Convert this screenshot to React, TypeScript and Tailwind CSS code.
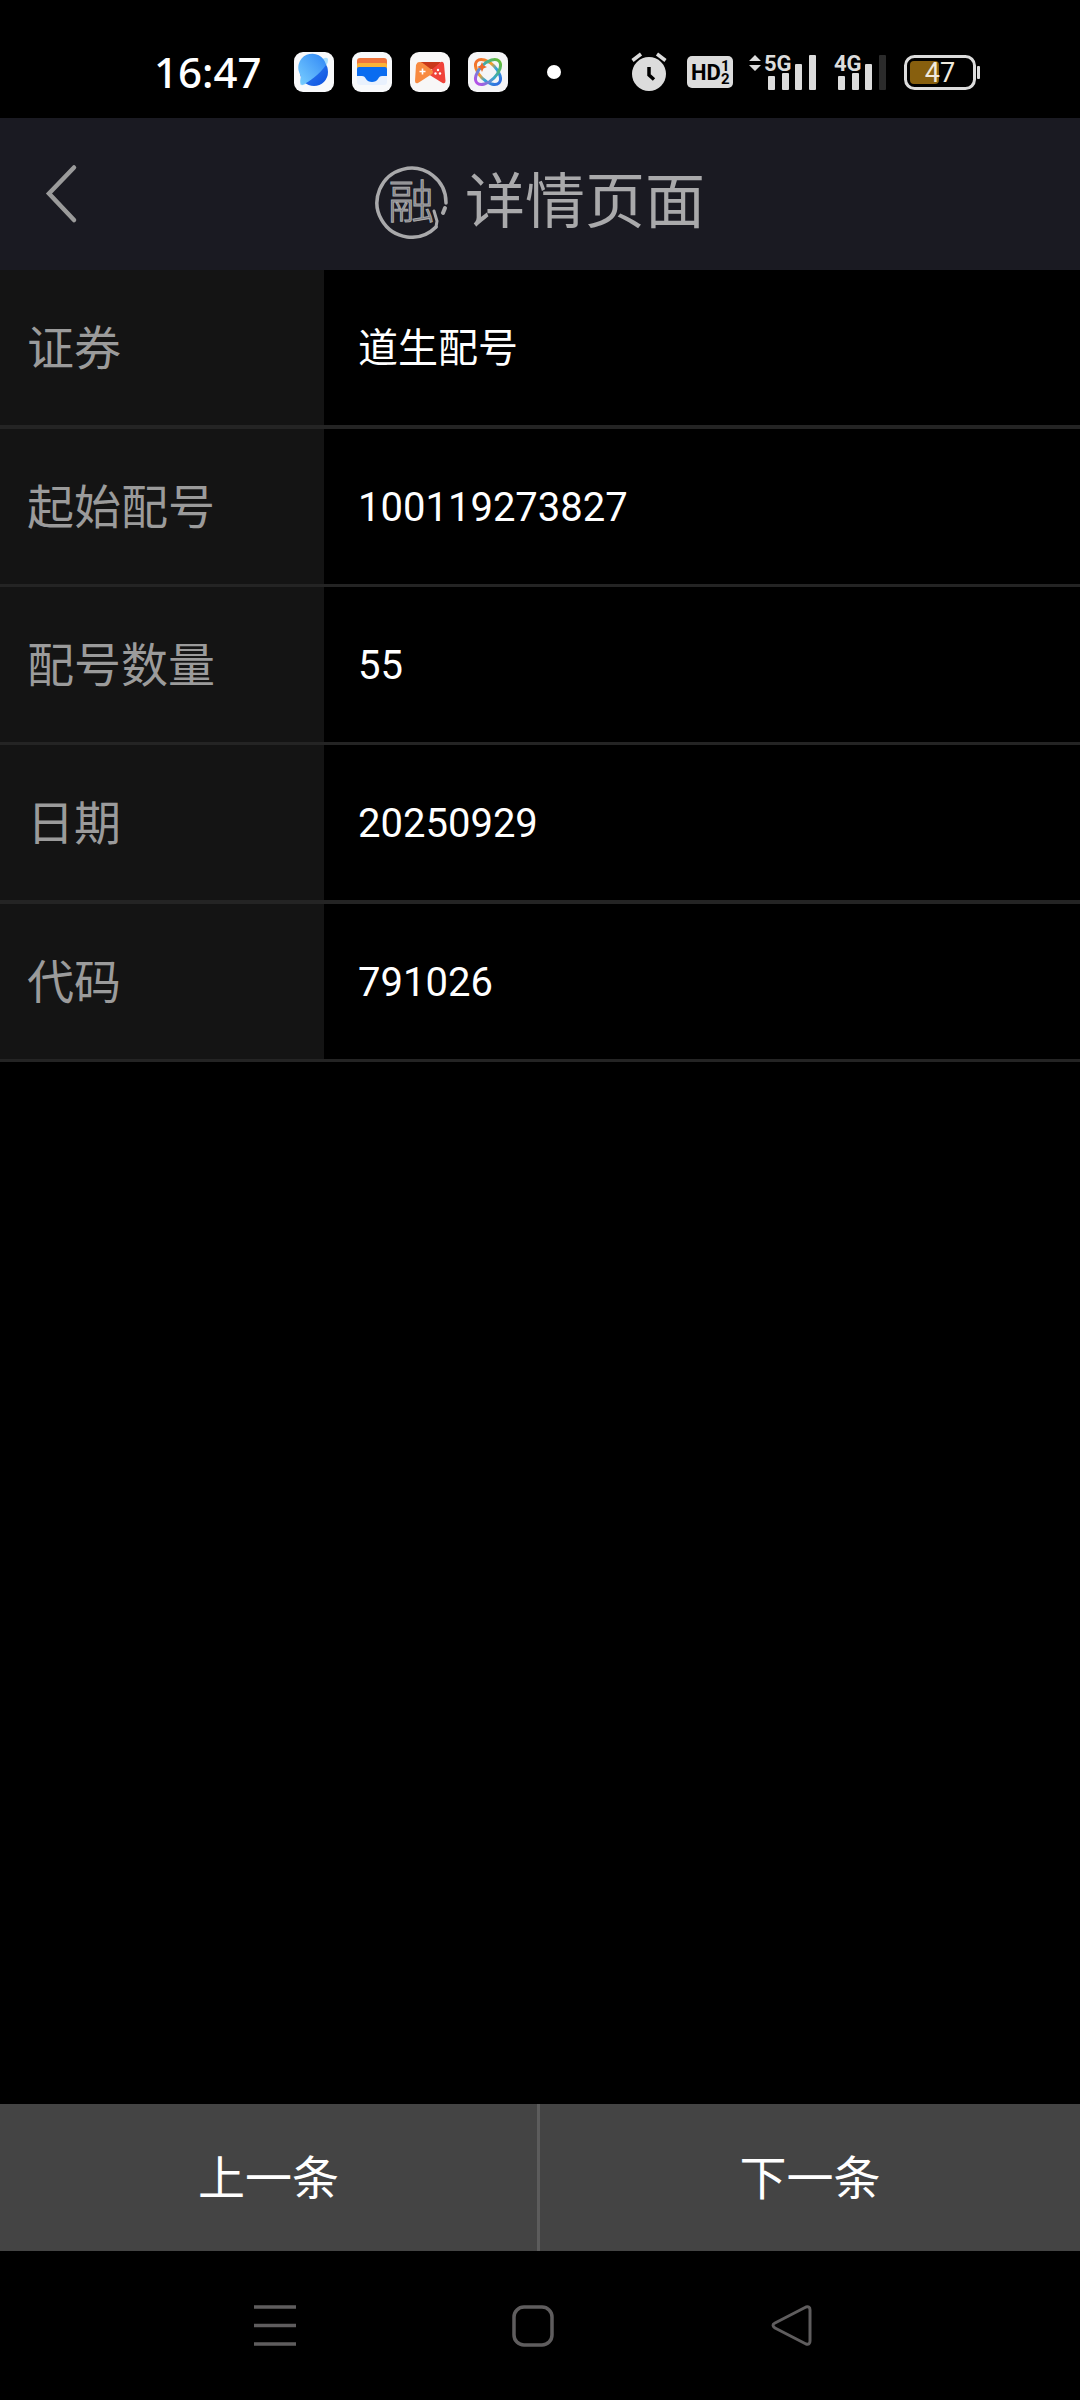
import React from "react";

const rows = [
  { label: "证券", value: "道生配号", line: "border-b-4" },
  { label: "起始配号", value: "100119273827", line: "border-b-3" },
  { label: "配号数量", value: "55", line: "border-b-3" },
  { label: "日期", value: "20250929", line: "border-b-4" },
  { label: "代码", value: "791026", line: "border-b-3" },
];

function Planet() {
  return (
    <svg width="40" height="40" viewBox="0 0 40 40" aria-hidden="true">
      <defs>
        <linearGradient id="pl" x1="0" y1="0" x2="1" y2="1">
          <stop offset="0" stopColor="#3f8df5" />
          <stop offset="1" stopColor="#0a4fe0" />
        </linearGradient>
        <linearGradient id="pl2" x1="1" y1="0" x2="0" y2="1">
          <stop offset="0" stopColor="#2f86f6" />
          <stop offset="1" stopColor="#7ad0ff" />
        </linearGradient>
      </defs>
      <rect width="40" height="40" rx="9" fill="#f8f9fb" />
      <path d="M27 8c4-3 7-3 7 0s-2 7-6 11L13 31c-4 3-7 3-7 0s2-7 4-9z" fill="#a9defc" />
      <circle cx="20" cy="20" r="14" fill="url(#pl)" />
      <path d="M32 13A14 14 0 1 0 7 24C6 28 6 31 8 33C15 30 26 22 32 13z" fill="url(#pl2)" />
    </svg>
  );
}

function Wallet() {
  return (
    <svg width="40" height="40" viewBox="0 0 40 40" aria-hidden="true">
      <rect width="40" height="40" rx="9" fill="#f8f9fb" />
      <rect x="5" y="20" width="30" height="13" rx="3" fill="#e9f1fd" />
      <path d="M5 14V9a3 3 0 0 1 3-3h24a3 3 0 0 1 3 3v5z" fill="#f0743c" />
      <path d="M5 17v-4a2 2 0 0 1 2-2h26a2 2 0 0 1 2 2v4z" fill="#fbb337" />
      <path d="M5 24v-7a2 2 0 0 1 2-2h26a2 2 0 0 1 2 2v7h-5c-2 0-3 1-4 3c-2 4-10 4-12 0c-1-2-2-3-4-3z" fill="#0a6cf0" />
    </svg>
  );
}

function Gamepad() {
  return (
    <svg width="40" height="40" viewBox="0 0 40 40" aria-hidden="true">
      <rect width="40" height="40" rx="9" fill="#f8f7f7" />
      <path d="M10 10h21l-6 7H16z" fill="#c9381a" />
      <path d="M20 19L31 10q2-1 3 2l1.500 17q0 3-3 2L18 22z" fill="#f0433a" />
      <path d="M9 10q-2 0-3 3L5 29q0 3 3 2l14-9q2-2 0-4L12 10.500q-1-.5-3-.5z" fill="#f88a40" />
      <path d="M12.500 16.500v6M9.500 19.500h6" stroke="#fff" strokeWidth="1.600" />
      <circle cx="28" cy="18" r="1.200" fill="#fff" />
      <circle cx="25.500" cy="21.500" r="1.200" fill="#fff" />
      <circle cx="30" cy="21.500" r="1.200" fill="#fff" />
    </svg>
  );
}

function Orbit() {
  return (
    <svg width="40" height="40" viewBox="0 0 40 40" aria-hidden="true">
      <defs>
        <linearGradient id="ob1" x1="0" y1="0" x2="0" y2="1">
          <stop offset="0" stopColor="#f2702c" />
          <stop offset="0.400" stopColor="#f0a12c" />
          <stop offset="0.600" stopColor="#35a6d8" />
          <stop offset="1" stopColor="#2f6fe0" />
        </linearGradient>
        <linearGradient id="ob2" x1="0" y1="0" x2="0" y2="1">
          <stop offset="0" stopColor="#62bb3c" />
          <stop offset="0.500" stopColor="#38a7c9" />
          <stop offset="1" stopColor="#b452e6" />
        </linearGradient>
      </defs>
      <rect width="40" height="40" rx="9" fill="#f5f5f7" />
      <ellipse rx="8.500" ry="15.500" transform="translate(20 20) rotate(-45)" fill="none" stroke="url(#ob1)" strokeWidth="3" />
      <ellipse rx="8.500" ry="15.500" transform="translate(20 20) rotate(45)" fill="none" stroke="url(#ob2)" strokeWidth="3" />
      <path d="M14 10l1.500 3.500L19 15l-3.500 1.500L14 20l-1.500-3.500L9 15l3.500-1.500z" fill="#ee6a2c" />
    </svg>
  );
}

function Alarm() {
  return (
    <svg width="36" height="40" viewBox="0 0 36 40" aria-label="闹钟">
      <circle cx="18" cy="22" r="17" fill="#dcdcdc" />
      <path d="M1.500 8.500L10 2M34.500 8.500L26 2" stroke="#dcdcdc" strokeWidth="3.500" />
      <path d="M18 15v8l5 4.500" stroke="#000" strokeWidth="3.500" fill="none" />
    </svg>
  );
}

function HdBadge() {
  return (
    <svg width="46" height="34" viewBox="0 0 46 34" aria-label="HD">
      <rect y="1" width="46" height="32" rx="5" fill="#dcdcdc" />
      <g fill="#000" fontFamily="Roboto,sans-serif" fontWeight="700">
        <text x="4" y="25" fontSize="22">HD</text>
        <text x="34" y="16" fontSize="15">1</text>
        <text x="34" y="29" fontSize="15">2</text>
      </g>
    </svg>
  );
}

function Signal({ name, last, arrows }: { name: string; last: string; arrows?: boolean }) {
  return (
    <div className="flex items-start gap-[3px]">
      {arrows && (
        <svg width="12" height="22" viewBox="0 0 12 22" aria-hidden="true">
          <path d="M0 11L6 5l6 6zM0 15l6 6 6-6z" fill="#dcdcdc" />
        </svg>
      )}
      <svg width="54" height="44" viewBox="0 -4 54 44" aria-label={name}>
        <text x="0" y="17" fontSize="22" fontWeight="700" fontFamily="Roboto,sans-serif" fill="#dcdcdc">
          {name}
        </text>
        <rect x="4" y="22" width="7" height="14" rx="1" fill="#dcdcdc" />
        <rect x="18" y="19" width="7" height="17" rx="1" fill="#dcdcdc" />
        <rect x="31" y="10" width="7" height="26" rx="1" fill="#dcdcdc" />
        <rect x="45" y="1" width="7" height="35" rx="1" fill={last} />
      </svg>
    </div>
  );
}

function Battery() {
  return (
    <svg width="76" height="36" viewBox="0 0 76 36" aria-label="电量 47">
      <rect x="1.500" y="2.500" width="69" height="32" rx="9" fill="none" stroke="#dcdcdc" strokeWidth="3" />
      <rect x="6" y="7" width="29" height="23" rx="4" fill="#875f0e" />
      <rect x="73" y="12" width="3" height="13" rx="1" fill="#dcdcdc" />
      <text x="36" y="28" textAnchor="middle" fontSize="27" fontFamily="Roboto,sans-serif" fill="#efe9dc">
        47
      </text>
    </svg>
  );
}

function Seal() {
  return (
    <svg width="74" height="74" viewBox="0 0 74 74" aria-label="融" fill="none" stroke="#a9a9ab">
      <path d="M71 38A34.500 34.500 0 1 0 61 62" strokeWidth="3.500" strokeLinecap="round" />
      <path d="M70 43l-2 5" strokeWidth="4" strokeLinecap="round" />
      <path d="M61 62l1-6-3-10" strokeWidth="3" strokeLinecap="round" />
      <text x="36" y="53" textAnchor="middle" fontSize="46" fontFamily="'Noto Sans CJK SC',sans-serif" fontWeight="300" fill="#77777c" strokeWidth="1">
        融
      </text>
    </svg>
  );
}

export default function App() {
  return (
    <div className="flex min-h-screen flex-col bg-black font-[Roboto,'Noto_Sans_CJK_SC',sans-serif] text-white">
      <div className="flex h-[118px] items-center justify-between pt-[26px] pr-[100px] pl-[154px]">
        <div className="flex items-center">
          <span className="w-[108px] font-['Noto_Sans',sans-serif] text-[42px] leading-[46px] font-medium">16:47</span>
          <div className="ml-8 flex items-center gap-[18px]">
            <Planet />
            <Wallet />
            <Gamepad />
            <Orbit />
          </div>
          <span className="ml-[39px] size-[14px] rounded-full bg-white" />
        </div>
        <div className="flex items-center">
          <Alarm />
          <div className="ml-5">
            <HdBadge />
          </div>
          <div className="ml-4">
            <Signal name="5G" last="#dcdcdc" arrows />
          </div>
          <div className="ml-4">
            <Signal name="4G" last="#2b2b2b" />
          </div>
          <div className="ml-4">
            <Battery />
          </div>
        </div>
      </div>

      <header className="grid h-[152px] grid-cols-[120px_1fr_120px] bg-[#1a1a22]">
        <button aria-label="返回" className="flex items-center pl-11">
          <svg width="34" height="60" viewBox="0 0 34 60" fill="none" stroke="#9b9b9b" strokeWidth="4.500" strokeLinecap="round">
            <path d="M30 3.500L5 29.500L30 56" />
          </svg>
        </button>
        <h1 className="flex items-center justify-center gap-4 pt-4 text-[60px] leading-[72px] font-normal text-[#a9a9ab]">
          <Seal />
          <span className="pt-[2px]">详情页面</span>
        </h1>
      </header>

      <table className="w-full table-fixed border-separate border-spacing-0 text-left">
        <tbody>
          {rows.map((r) => (
            <tr key={r.label}>
              <th scope="row" className={`w-[30%] border-[#242424] bg-[#141414] py-0 pl-[27px] align-middle text-[47px] font-normal text-[#9b9b9b] ${r.line}`}>
                <div className="flex h-[155px] items-center pt-[3px]">{r.label}</div>
              </th>
              <td className={`border-[#242424] pt-[3px] pb-0 pl-[34px] align-middle text-[40px] ${r.line}`}>{r.value}</td>
            </tr>
          ))}
        </tbody>
      </table>

      <div className="mt-auto grid h-[147px] grid-cols-2 bg-[#444444] text-[47px]">
        <button className="border-r-3 border-[#5c5c5c] pt-[3px]">上一条</button>
        <button className="pt-[3px]">下一条</button>
      </div>

      <nav className="flex h-[149px] items-center justify-center gap-[216px] pr-[14px]">
        <button aria-label="最近任务">
          <svg width="42" height="42" viewBox="0 0 42 42" fill="none" stroke="#5f5d5e" strokeWidth="3.500">
            <path d="M0 2h42M0 20.500h42M0 39h42" />
          </svg>
        </button>
        <button aria-label="主屏幕">
          <svg width="42" height="42" viewBox="0 0 42 42" fill="none" stroke="#5f5d5e" strokeWidth="3.500">
            <rect x="2" y="2" width="38" height="38" rx="10" />
          </svg>
        </button>
        <button aria-label="返回上级">
          <svg width="42" height="42" viewBox="0 0 42 42" fill="none" stroke="#5f5d5e" strokeWidth="3" strokeLinejoin="round">
            <path d="M40 5v31q0 4-4 3L5 23q-4-3 0-5L36 2q4-1 4 3z" />
          </svg>
        </button>
      </nav>
    </div>
  );
}
